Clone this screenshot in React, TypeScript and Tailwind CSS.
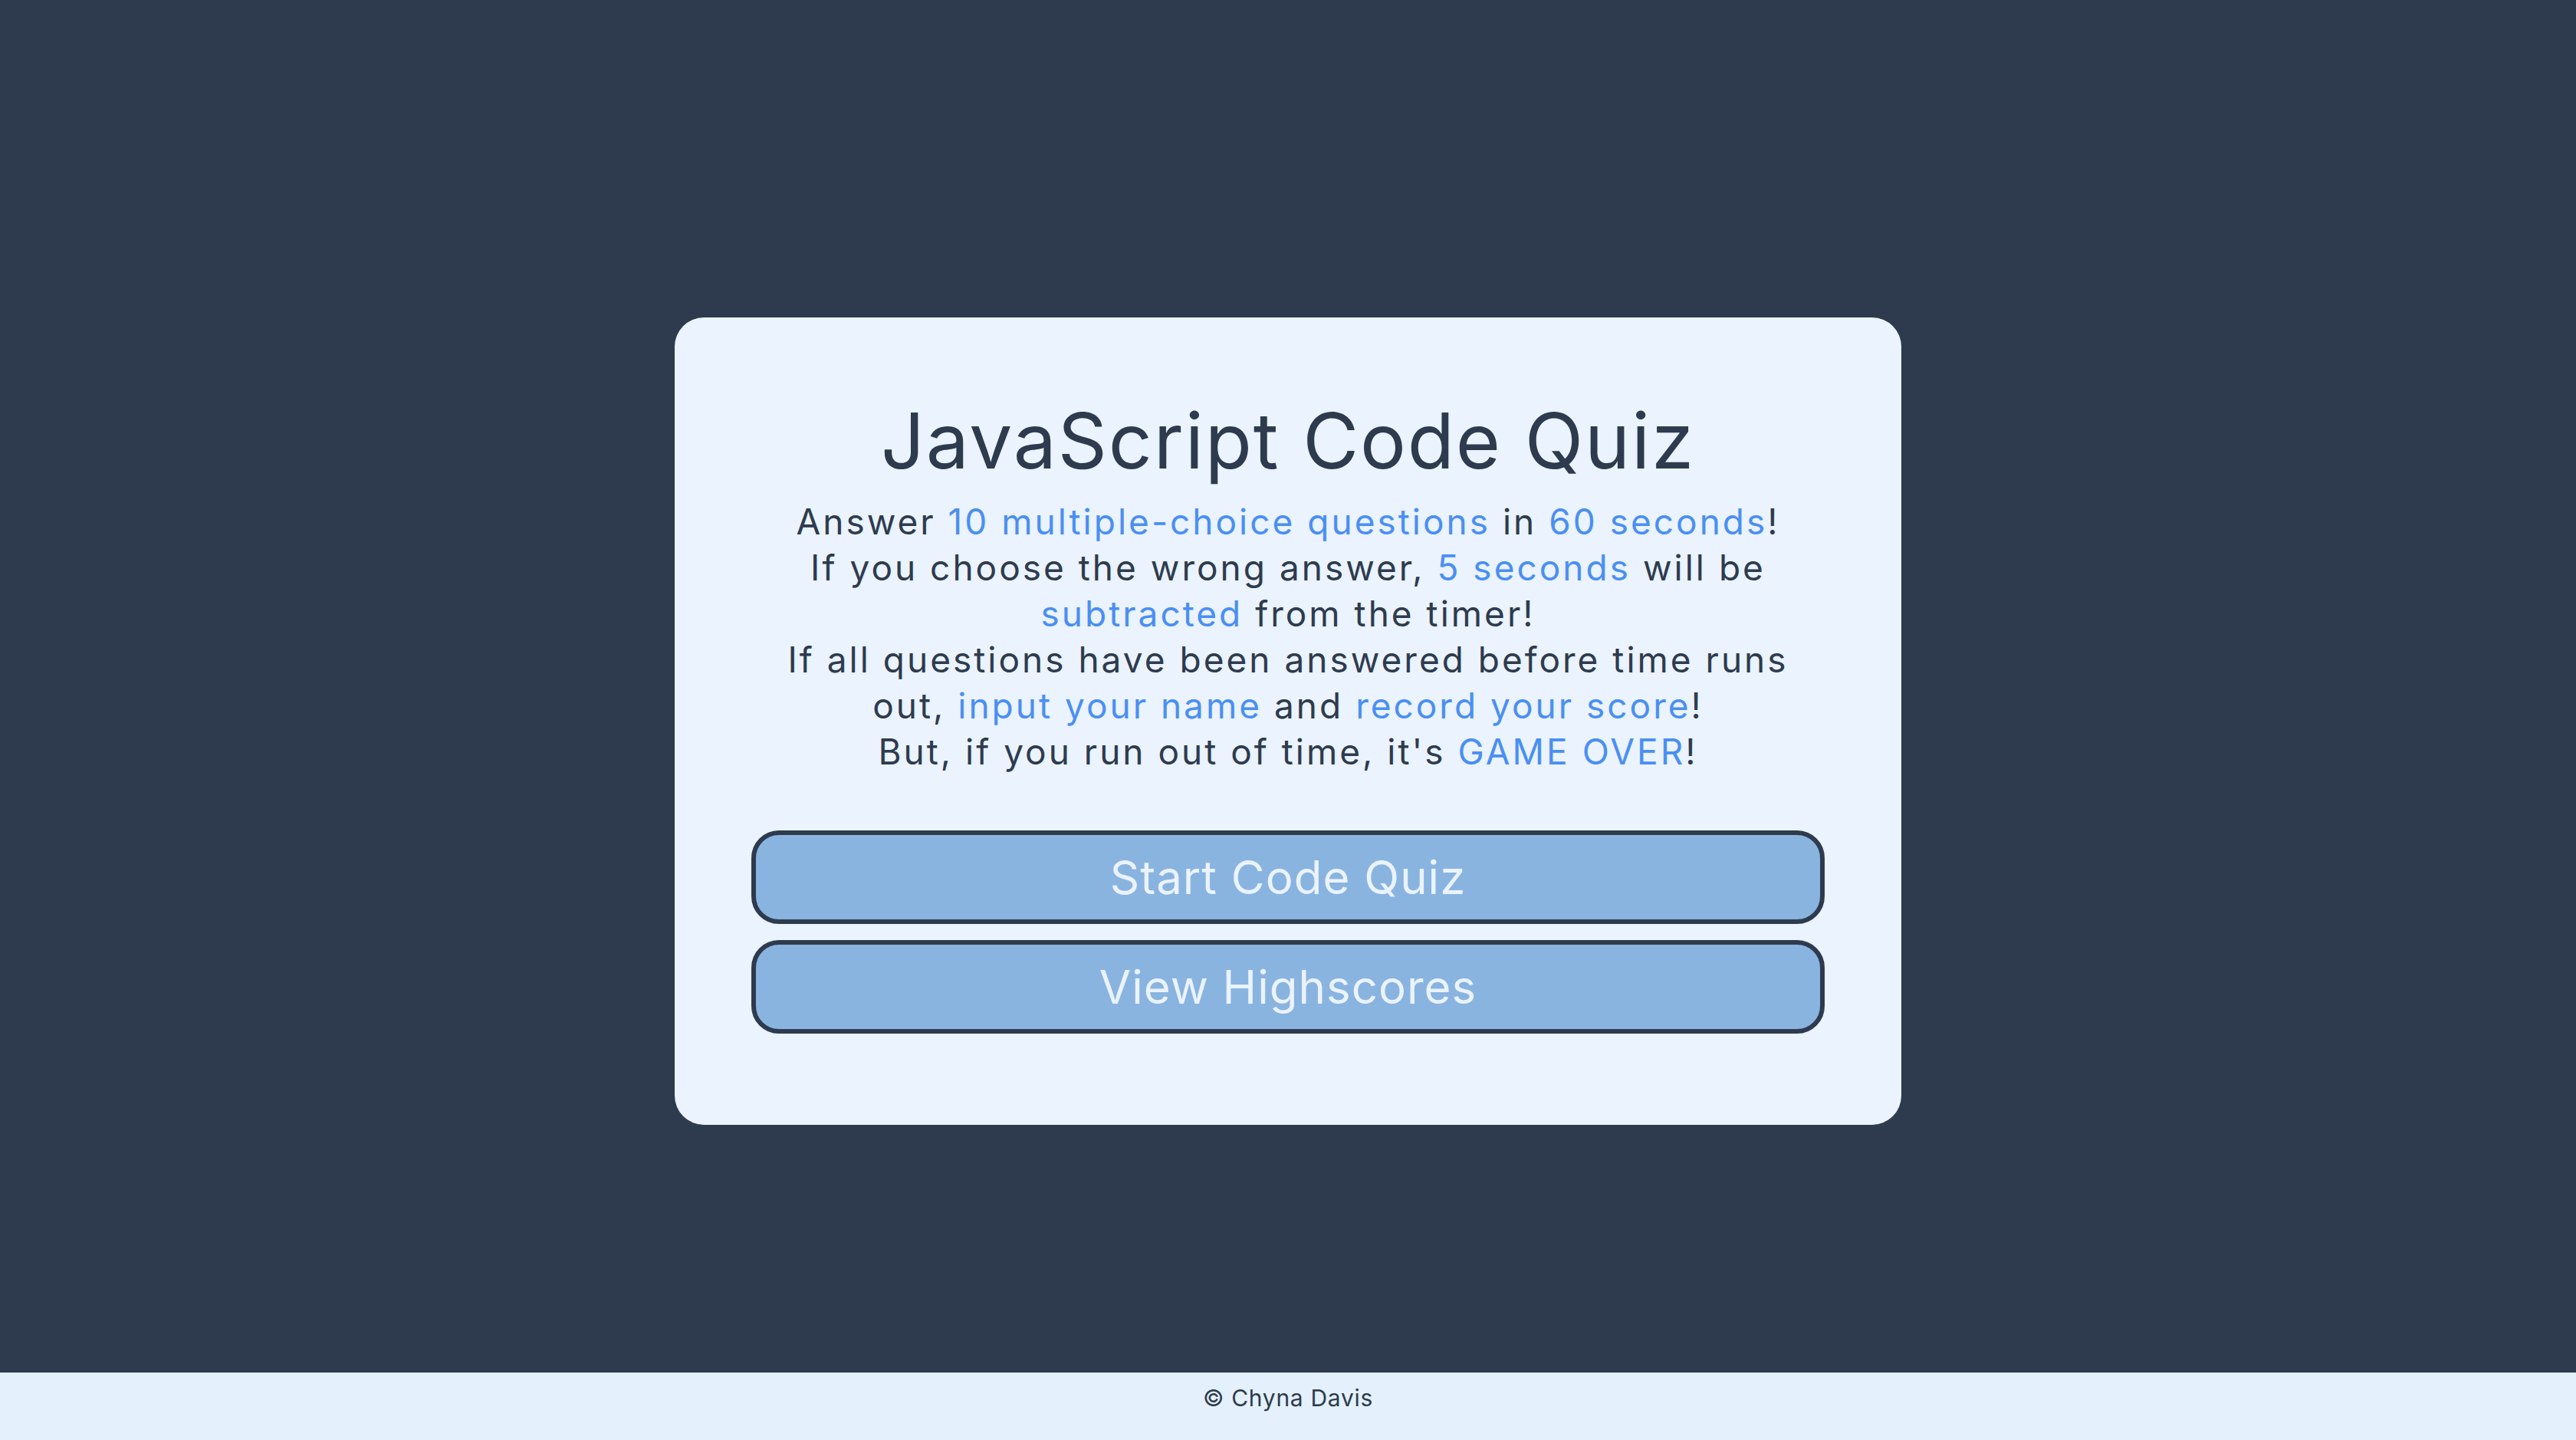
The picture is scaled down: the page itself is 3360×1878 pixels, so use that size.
import React from "react";

const highlight = "text-[#4a8ff2]";

export default function App() {
  return (
    <div className="min-h-screen flex flex-col bg-[#2e3b4e] font-['Inter',sans-serif] text-[#2e3b4e]">
      <main className="flex-1 pt-[414px]">
        <div className="w-[1600px] mx-auto rounded-[38px] bg-[#eaf3fe] px-[100px] pt-[96px] pb-[119px] text-center">
          <h1 className="text-[100px] leading-[130px] tracking-[1.8px]">JavaScript Code Quiz</h1>
          <div className="mt-[10px] text-[46px] leading-[60px] tracking-[3px]">
            <p>
              Answer <span className={highlight}>10 multiple-choice questions</span> in{" "}
              <span className={highlight}>60 seconds</span>!
            </p>
            <p>
              If you choose the wrong answer, <span className={highlight}>5 seconds</span> will be
            </p>
            <p>
              <span className={highlight}>subtracted</span> from the timer!
            </p>
            <p>If all questions have been answered before time runs</p>
            <p>
              out, <span className={highlight}>input your name</span> and{" "}
              <span className={highlight}>record your score</span>!
            </p>
            <p>
              But, if you run out of time, it's <span className={highlight}>GAME OVER</span>!
            </p>
          </div>
          <div className="mt-[73px] flex flex-col gap-[21px]">
            <button className="h-[122px] w-full rounded-[36px] border-[6px] border-[#2e3b4e] bg-[#8ab4e0] text-[60px] tracking-[1px] text-[#eaf3fe]">
              Start Code Quiz
            </button>
            <button className="h-[122px] w-full rounded-[36px] border-[6px] border-[#2e3b4e] bg-[#8ab4e0] text-[60px] tracking-[1px] text-[#eaf3fe]">
              View Highscores
            </button>
          </div>
        </div>
      </main>
      <footer className="h-[88px] bg-[#e4f1fc] text-center text-[30px] leading-[66px] tracking-[0.7px]">
        © Chyna Davis
      </footer>
    </div>
  );
}
